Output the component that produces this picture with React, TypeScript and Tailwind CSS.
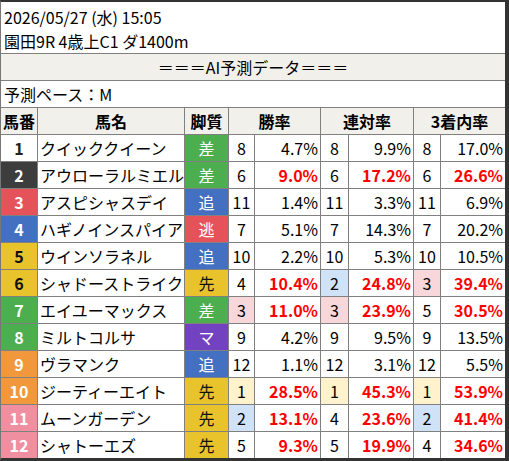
const FONT = { fontFamily: '"Noto Sans CJK JP", "Noto Sans", sans-serif' };

type Horse = {
  no: number;
  name: string;
  style: string;
  ranks: [number, number, number];
  pcts: [string, string, string];
  hot: boolean;
};

const horses: Horse[] = [
  { no: 1, name: "クイッククイーン", style: "差", ranks: [8, 8, 8], pcts: ["4.7%", "9.9%", "17.0%"], hot: false },
  { no: 2, name: "アウローラルミエル", style: "差", ranks: [6, 6, 6], pcts: ["9.0%", "17.2%", "26.6%"], hot: true },
  { no: 3, name: "アスピシャスデイ", style: "追", ranks: [11, 11, 11], pcts: ["1.4%", "3.3%", "6.9%"], hot: false },
  { no: 4, name: "ハギノインスパイア", style: "逃", ranks: [7, 7, 7], pcts: ["5.1%", "14.3%", "20.2%"], hot: false },
  { no: 5, name: "ウインソラネル", style: "追", ranks: [10, 10, 10], pcts: ["2.2%", "5.3%", "10.5%"], hot: false },
  { no: 6, name: "シャドーストライク", style: "先", ranks: [4, 2, 3], pcts: ["10.4%", "24.8%", "39.4%"], hot: true },
  { no: 7, name: "エイユーマックス", style: "差", ranks: [3, 3, 5], pcts: ["11.0%", "23.9%", "30.5%"], hot: true },
  { no: 8, name: "ミルトコルサ", style: "マ", ranks: [9, 9, 9], pcts: ["4.2%", "9.5%", "13.5%"], hot: false },
  { no: 9, name: "ヴラマンク", style: "追", ranks: [12, 12, 12], pcts: ["1.1%", "3.1%", "5.5%"], hot: false },
  { no: 10, name: "ジーティーエイト", style: "先", ranks: [1, 1, 1], pcts: ["28.5%", "45.3%", "53.9%"], hot: true },
  { no: 11, name: "ムーンガーデン", style: "先", ranks: [2, 4, 2], pcts: ["13.1%", "23.6%", "41.4%"], hot: true },
  { no: 12, name: "シャトーエズ", style: "先", ranks: [5, 5, 4], pcts: ["9.3%", "19.9%", "34.6%"], hot: true },
];

// 枠番ごとの色
const frameClass: Record<number, string> = {
  1: "bg-white text-[#222]",
  2: "bg-[#3d3d3d] text-white",
  3: "bg-[#e6525a] text-white",
  4: "bg-[#4470c2] text-white",
  5: "bg-[#e8c32b] text-[#111]",
  6: "bg-[#e8c32b] text-[#111]",
  7: "bg-[#4cae4f] text-white",
  8: "bg-[#4cae4f] text-white",
  9: "bg-[#f0983b] text-white",
  10: "bg-[#f0983b] text-white",
  11: "bg-[#f08fa0] text-white",
  12: "bg-[#f08fa0] text-white",
};

const styleClass: Record<string, string> = {
  差: "bg-[#4cae4f] text-white",
  追: "bg-[#4470c2] text-white",
  逃: "bg-[#e6525a] text-white",
  先: "bg-[#e8c32b] text-[#111]",
  マ: "bg-[#7242c0] text-white",
};

function rankClass(r: number) {
  if (r === 1) return "bg-[#fff2cc]";
  if (r === 2) return "bg-[#cfe2f8]";
  if (r === 3) return "bg-[#f8d7da]";
  return "bg-white";
}

export default function App() {
  return (
    <div
      className="w-[509px] h-[461px] bg-white border-t-2 border-r-4 border-b-[3px] border-l border-t-[#333] border-r-[#333] border-b-[#333] border-l-[#777] text-[16px] text-black overflow-hidden"
      style={FONT}
    >
      <div className="h-[51px] pt-[3px] pl-[3px] leading-[24px]">
        <div>2026/05/27 (水) 15:05</div>
        <div>園田9R 4歳上C1 ダ1400m</div>
      </div>

      <div className="grid grid-cols-[36px_146px_43px_25px_65px_27px_64px_26px_64px] gap-px bg-[#808080] border-t border-[#808080] leading-[26px]">
        <div className="col-span-9 h-[26px] bg-[#f2f0eb] text-center">＝＝＝AI予測データ＝＝＝</div>
        <div className="col-span-9 h-[26px] bg-white pl-[3px]">予測ペース：M</div>

        <div className="h-[26px] bg-[#f2f0eb] text-center font-bold">馬番</div>
        <div className="h-[26px] bg-[#f2f0eb] text-center font-bold">馬名</div>
        <div className="h-[26px] bg-[#f2f0eb] text-center font-bold">脚質</div>
        <div className="col-span-2 h-[26px] bg-[#f2f0eb] text-center font-bold">勝率</div>
        <div className="col-span-2 h-[26px] bg-[#f2f0eb] text-center font-bold">連対率</div>
        <div className="col-span-2 h-[26px] bg-[#f2f0eb] text-center font-bold">3着内率</div>

        {horses.map((h) => (
          <div key={h.no} className="contents">
            <div className={`h-[26px] text-center font-bold ${frameClass[h.no]}`}>{h.no}</div>
            <div className="h-[26px] bg-white pl-[2px] whitespace-nowrap overflow-hidden">{h.name}</div>
            <div className={`h-[26px] text-center ${styleClass[h.style]}`}>{h.style}</div>
            {h.ranks.map((r, i) => (
              <div key={i} className="contents">
                <div className={`h-[26px] text-center ${rankClass(r)}`}>{r}</div>
                <div
                  className={`h-[26px] bg-white text-right pr-[2px] ${h.hot ? "text-[#ff0000] font-bold" : ""}`}
                >
                  {h.pcts[i]}
                </div>
              </div>
            ))}
          </div>
        ))}
      </div>
    </div>
  );
}
